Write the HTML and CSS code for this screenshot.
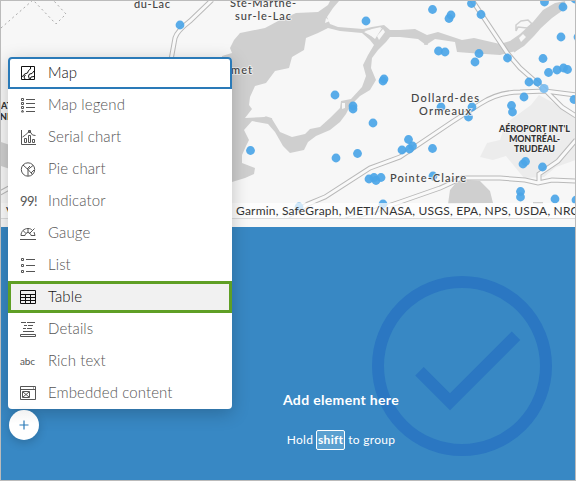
FILE: index.html
```html
<!DOCTYPE html>
<html lang="en">
<head>
<meta charset="utf-8">
<title>Dashboard</title>
<link rel="stylesheet" href="styles.css">
</head>
<body>
<main class="dashboard">
  <section class="map">
    <svg class="map-canvas" viewBox="1 1 574 217" width="574" height="217">
      <path class="land" d="M480 157l7-14 13-3 5-16 26-19 8-10 37 20v45l-20 7-12 10-20 1-18-22-13 4z"/>
      <path class="water" fill-rule="evenodd" d="M339 1L333 8 327 17 330 24 338 27 363 29 372 27 384 25 390 30 400 30 415 29 427 35 438 32 453 37 462 40 474 38 487 41 500 44 510 41 520 34 533 22 543 10 555 3 565 1 566 8 552 18 541 28 534 36 524 46 516 51 500 55 470 53 457 52 455 42 435 39 426 45 418 39 400 37 390 37 386 42 378 50 372 58 371 68 376 80 370 90 360 96 350 106 346 114 340 122 330 130 316 136 308 142 304 150 290 153 283 146 275 132 268 124 252 121 244 130 249 140 246 146 242 155 242 163 255 168 254 174 245 178 232 182 220 170 222 56 232 53 230 48 234 40 240 33 265 28 280 20 296 13 318 12 328 5 330 1ZM362 33L340 31 328 28 318 33 306 38 304 50 292 57 289 68 275 71 266 83 255 86 250 97 249 105 252 109 245 118 265 117 272 119 280 132 292 137 305 134 310 129 320 127 330 118 340 108 341 101 351 99 362 87 366 76 363 65 368 55 374 45 370 40ZM365 31L375 39 382 28Z"/>
      <path class="water" d="M1 142l9 3v24l-9-3zM448 204l2-14 5-6 7-4 18 1 10 10 3 12zM533 202h10v2h-10z"/>
      <path class="isle" d="M364 32l8-3 9-2-6 11zM377 36l6-7 2 3-6 8zM342 103h3v5l-3 1zM326 18l4 3-5 2zM519 38l4-4 3 3-5 5z"/>
      <path class="shore" d="M516 25l5-4 7-1 4 4-5 4-9-1-2 4zM424 44l4 0M514 52l6-5M262 119l4-2 6 2"/>
      <path class="dotted" d="M1 28L33 0 56 24 66 14 54 1"/>
      <g class="road-edge">
        <path id="a" d="M212 0L190 21Q177 31 175 38L171 60M472 0L508 54 520 68 544 89 562 107 576 116M576 95L545 91 520 92Q498 92 480 104L452 122 400 157 370 168 325 197 308 204 285 218M340 222L400 202 440 188 462 178 500 178 525 180 538 183 552 180 576 181M539 182V174L558 161 576 140M0 193L9 188"/>
      </g>
      <use href="#a" class="road-fill"/>
      <g class="dots">
        <circle cx="180" cy="25" r="4.4"/><circle cx="366" cy="21" r="4.4"/><circle cx="384" cy="79" r="4.4"/><circle cx="383" cy="81" r="4.4"/><circle cx="335" cy="95" r="4.4"/><circle cx="353" cy="106" r="4.4"/><circle cx="353" cy="109" r="4.4"/><circle cx="373" cy="123" r="4.4"/><circle cx="250.500" cy="150.500" r="4.4"/><circle cx="336" cy="158" r="4.4"/><circle cx="357.500" cy="153.500" r="4.4"/>
        <circle cx="369" cy="179" r="4.4"/><circle cx="376" cy="180.500" r="4.4"/><circle cx="374" cy="177.500" r="4.4"/><circle cx="381" cy="177.500" r="4.4"/><circle cx="408.500" cy="139.500" r="4.4"/><circle cx="402" cy="150" r="4.4"/><circle cx="412.500" cy="146" r="4.4"/><circle cx="409.500" cy="149" r="4.4"/><circle cx="432.500" cy="148.500" r="4.4"/><circle cx="433" cy="176" r="4.4"/>
        <circle cx="432.500" cy="9.500" r="4.4"/><circle cx="449" cy="18.500" r="4.4"/><circle cx="451" cy="15" r="4.4"/><circle cx="471.500" cy="3.500" r="4.4"/><circle cx="481" cy="14.500" r="4.4"/><circle cx="438.500" cy="51" r="4.4"/><circle cx="445" cy="52" r="4.4"/><circle cx="479" cy="53.500" r="4.4"/><circle cx="475" cy="62" r="4.4"/><circle cx="507.500" cy="58" r="4.4"/><circle cx="543" cy="58.500" r="4.4"/><circle cx="544.500" cy="2" r="4.4"/><circle cx="563" cy="7" r="4.4"/><circle cx="561" cy="37" r="4.4"/><circle cx="578" cy="37" r="4.4"/><circle cx="575" cy="-1" r="4.4"/>
        <circle cx="548.500" cy="72.500" r="4.4"/><circle cx="557" cy="70" r="4.4"/><circle cx="563.500" cy="68" r="4.4"/><circle cx="567.500" cy="69.500" r="4.4"/><circle cx="529" cy="82" r="4.4"/><circle cx="537.500" cy="82" r="4.4"/><circle class="pale" cx="544" cy="88.500" r="4.6"/><circle cx="524" cy="97" r="4.4"/><circle cx="511.500" cy="105.500" r="4.4"/><circle cx="512.500" cy="112" r="4.4"/><circle cx="441" cy="107" r="4.4"/><circle cx="472" cy="107" r="4.4"/><circle cx="468.500" cy="117" r="4.4"/><circle cx="574" cy="99.500" r="4.4"/>
        <circle cx="523" cy="164" r="4.4"/><circle cx="525.500" cy="161.500" r="4.4"/><circle cx="542.500" cy="167" r="4.4"/><circle cx="520.500" cy="191.500" r="4.4"/><circle cx="520.500" cy="197" r="4.4"/><circle cx="555" cy="199" r="4.4"/><circle cx="576" cy="200" r="4.4"/><circle cx="383" cy="204" r="4.4"/><circle cx="299" cy="207" r="4.4"/>
      </g>
      <g class="place">
        <text x="134" y="8" textLength="36">du-Lac</text>
        <text x="230" y="7" textLength="66">Ste-Marthe-</text>
        <text x="235" y="20" textLength="56">sur-le-Lac</text>
        <text x="231" y="74" textLength="21">met</text>
        <text x="411" y="102" textLength="68">Dollard-des</text>
        <text x="419" y="115" textLength="52">Ormeaux</text>
        <text x="390" y="182" textLength="76">Pointe-Claire</text>
      </g>
      <g class="airport">
        <text x="499" y="132" textLength="71">AÉROPORT INT'L</text>
        <text x="509" y="142" textLength="51">MONTRÉAL-</text>
        <text x="514" y="152" textLength="41">TRUDEAU</text>
        <text x="1" y="109">AT</text>
        <text x="0" y="120">ND</text>
      </g>
    </svg>
    <div class="attribution"><span class="powered">V</span><span class="sources">Garmin, SafeGraph, METI/NASA, USGS, EPA, NPS, USDA, NRC</span></div>
  </section>
  <section class="drop">
    <svg class="check" viewBox="0 0 180 180" width="180" height="180"><circle cx="90" cy="90" r="84"/><path d="M47.500 95.300L78 125.800 144 59.800"/></svg>
    <div class="prompt">
      <h1>Add element here</h1>
      <p><span>Hold</span><kbd>shift</kbd><span>to group</span></p>
    </div>
  </section>
  <nav class="menu">
    <button class="item focus"><svg viewBox="0 0 16 16"><path d="M1.500 1.500h13v13h-13z"/><path d="M10.500 2v2l-2 1.500-1 2.500-3 1-1 2-2 .5M5 14l-1-2 1.500-2M14 6l-2 2.500-2.500.5-1 2 1 3.500M14 11.500l-3 .5-1 2.500"/></svg><span>Map</span></button>
    <button class="item"><svg viewBox="0 0 16 16"><path d="M1.500 1.500h2v2h-2zM1.500 5.500h2v2h-2zM1.500 9.500h2v2h-2zM1.500 15l1-2 1 2zM6 2.500h9M6 6.500h9M6 10.500h9M6 14.500h9"/></svg><span>Map legend</span></button>
    <button class="item"><svg viewBox="0 0 16 16"><path d="M1.500 1v14.500H16M4.500 13.500v-4h2v4zM8.500 13.500v-7h2v7zM12.500 13.500v-3h2v3zM2.500 8l3-2 4-4 3 4 3 .5M8.500 1.500h2v2h-2z"/></svg><span>Serial chart</span></button>
    <button class="item"><svg viewBox="0 0 16 16"><circle cx="8" cy="8.500" r="6.700"/><path d="M8 8.500L3 4M8 8.500L13 4.500M8 8.500l4.500 5M8 8.500V15M10 5l-3 3M11 12l3-3"/></svg><span>Pie chart</span></button>
    <button class="item"><b class="glyph">99!</b><span>Indicator</span></button>
    <button class="item"><svg viewBox="0 0 16 16"><path d="M1 10.500C1 6.500 4 3.500 8 3.500c2 0 3 .5 4 1.500M14 7l1 3.500h-4C10.500 8.500 9.500 7.500 8 7.500s-2.500 1-3 3H1M3 5.500l3 3M8 3.500v4M9 9l5.500-5.500M0 14.500h16"/></svg><span>Gauge</span></button>
    <button class="item"><svg viewBox="0 0 16 16"><path d="M1.500 1.500h2v2h-2zM1.500 7.500h2v2h-2zM1.500 13.500h2v2h-2zM6 2.500h9M6 8.500h9M6 14.500h9"/></svg><span>List</span></button>
    <button class="item selected"><svg viewBox="0 0 16 16"><path d="M.5 1.500h15v13H.5zM.5 5.500h15M.5 8.500h15M.5 11.500h15M5.500 5v9.500M10.500 5v9.500"/></svg><span>Table</span></button>
    <button class="item"><svg viewBox="0 0 16 16"><path d="M1 1.500h5M7 1.500h8M4 4.500h3M8 4.500h5M3 7.500h3M7 7.500h5M3 10.500h11M.5 13.500h15v2H.5z"/></svg><span>Details</span></button>
    <button class="item"><b class="glyph abc">abc</b><span>Rich text</span></button>
    <button class="item"><svg viewBox="0 0 16 16"><path d="M.5 1.500h15v13H.5zM.5 4.500h15M13 3h1M2.500 6.500h7v6h-7zM3 7l6 5M9 7l-6 5"/></svg><span>Embedded content</span></button>
  </nav>
  <button class="add" aria-label="Add"><svg viewBox="0 0 10 10" width="10" height="10"><path d="M5 .5v9M.5 5h9"/></svg></button>
</main>
</body>
</html>
```
FILE: styles.css
```css
* { box-sizing: border-box; }
body { margin: 0; font-family: Lato, "Open Sans", sans-serif; }
.dashboard { position: relative; width: 576px; height: 481px; border: 1px solid #bbb; display: grid; grid-template-rows: 226px 1fr; overflow: hidden; background: #f8f8f8; }
.map { position: relative; overflow: hidden; }
.map-canvas { display: block; background: #f7f7f7; }
.land { fill: #ececec; }
.water { fill: #cfcfcf; }
.isle { fill: #f7f7f7; }
.shore { fill: none; stroke: #cfcfcf; stroke-width: 1.5; }
.dotted { fill: none; stroke: #aaa; stroke-width: 1; stroke-dasharray: 2 3; }
.road-edge { fill: none; stroke: #b9b9b9; stroke-width: 5; }
.road-fill { stroke: #f9f9f9; stroke-width: 3; }
.road-edge path { stroke: inherit; stroke-width: inherit; }
.map-canvas use { fill: none; }
.dots { fill: #4ba5e7; fill-opacity: .92; }
.dots .pale { fill: #79bcef; }
.place { font-size: 11px; fill: #444; stroke: #f7f7f7; stroke-width: 2px; stroke-opacity: .7; paint-order: stroke; font-weight: 500; }
.airport { font-size: 9px; font-weight: 900; fill: #333; stroke: #f4f4f4; stroke-width: 1.5px; paint-order: stroke; }
.attribution { position: absolute; left: 0; right: 0; bottom: 8px; height: 16px; display: flex; align-items: center; background: rgba(255, 255, 255, .72); border-bottom: 1px solid #ddd; color: #333; font-size: 12px; line-height: 16px; white-space: nowrap; }
.powered { width: 235px; padding-left: 5px; flex: none; }
.sources { letter-spacing: .2px; }
.drop { display: grid; background: #3888c4; }
.check { grid-area: 1 / 1; margin: 49px 0 0 370.500px; fill: none; stroke: #2b77c2; stroke-width: 12; }
.prompt { grid-area: 1 / 1; display: flex; flex-direction: column; align-items: center; width: 320px; margin-left: 180px; padding-top: 163px; color: #fff; }
.prompt h1 { margin: 0; font-size: 14px; line-height: 20px; font-weight: 700; letter-spacing: .33px; }
.prompt p { margin: 20px 0 0; display: flex; align-items: center; gap: 3px; font-size: 12px; line-height: 20px; letter-spacing: .3px; }
.prompt kbd { height: 20px; width: 29px; border: 1px solid #fff; border-radius: 2px; background: #5ba0d0; font: 700 12px/17px Lato, sans-serif; text-align: center; }
.menu { position: absolute; left: 7px; top: 56px; width: 224px; height: 352px; display: flex; flex-direction: column; background: #fff; border-radius: 4px; overflow: visible; box-shadow: 0 4px 18px rgba(0, 0, 0, .22); }
.item { display: flex; align-items: center; gap: 12px; height: 32px; padding: 0 0 0 12px; border: 0; background: none; color: #555; font: 300 15px/20px Lato, sans-serif; letter-spacing: .1px; text-align: left; }
.item svg { width: 16px; height: 16px; flex: none; fill: none; stroke: currentColor; stroke-width: 1; }
.item span { position: relative; top: -1px; }
.focus { border: 2px solid #2a7ab8; border-radius: 4px 4px 0 0; padding-left: 10px; color: #111; }
.selected { border: 3px solid #5f9f25; padding-left: 9px; background: #f1f1f1; color: #111; }
.glyph { width: 16px; flex: none; font-size: 13px; font-weight: 400; letter-spacing: -.6px; }
.abc { font-size: 10px; letter-spacing: -.1px; }
.add { position: absolute; left: 8px; top: 409px; width: 30px; height: 30px; padding: 0; display: grid; place-items: center; border: 0; border-radius: 50%; background: linear-gradient(#f2f2f2, #fff 45%); box-shadow: 0 3px 10px rgba(0, 0, 0, .18); }
.add svg { fill: none; stroke: #2a7ab8; stroke-width: 1.2; }
```
